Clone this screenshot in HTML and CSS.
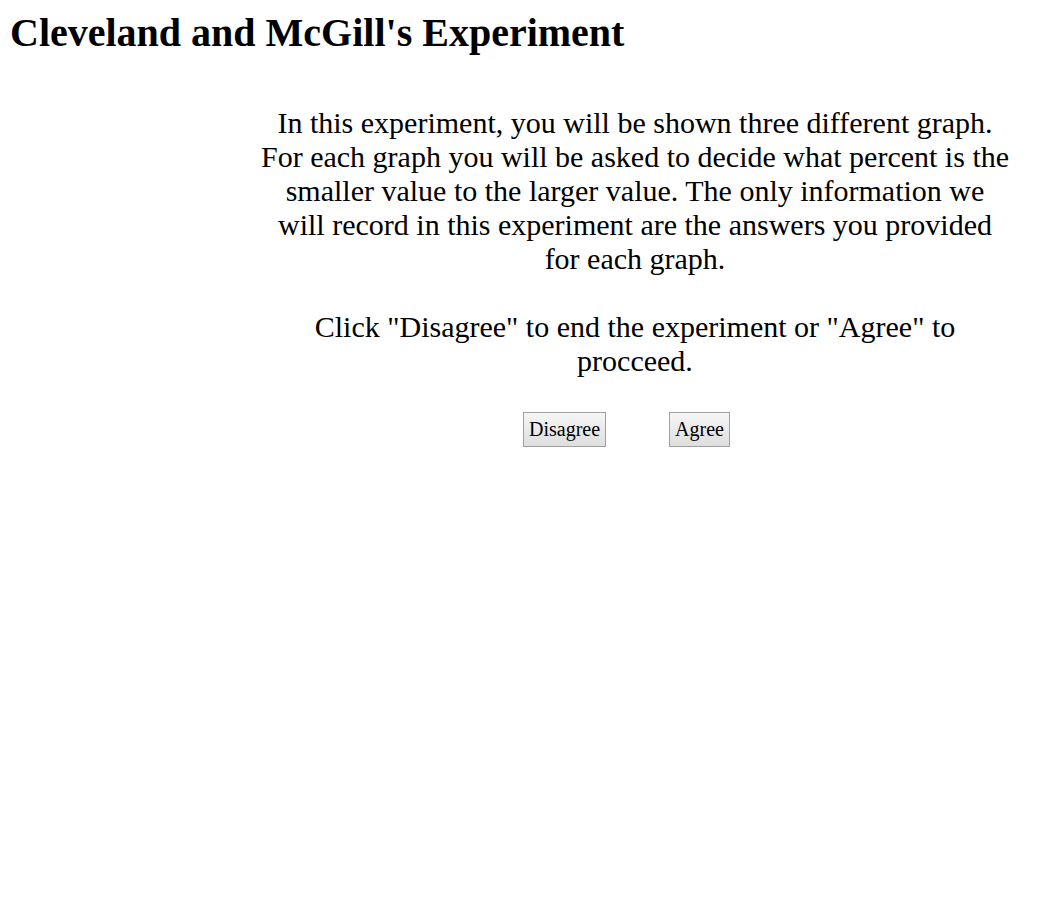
FILE: index.html
```html
<!DOCTYPE html>
<html>
<head>
<meta charset="utf-8">
<link rel="stylesheet" href="styles.css">
</head>
<body>
<h1 class="title">Cleveland and McGill's Experiment</h1>
<div class="intro">
  <p class="text">In this experiment, you will be shown three different graph. For each graph you will be asked to decide what percent is the smaller value to the larger value. The only information we will record in this experiment are the answers you provided for each graph.<br><br>Click "Disagree" to end the experiment or "Agree" to procceed.</p>
  <div class="actions">
    <button class="btn">Disagree</button>
    <button class="btn">Agree</button>
  </div>
</div>
</body>
</html>
```
FILE: styles.css
```css
body {
  margin: 8px;
  font-family: "Liberation Serif", "Times New Roman", serif;
  color: #000;
  background: #fff;
}
.title {
  font-size: 40px;
  font-weight: bold;
  margin: 1px 0 0 2px;
}
.intro {
  width: 752px;
  margin: 50px 0 0 251px;
  text-align: center;
}
.text {
  font-size: 30px;
  margin: 0;
}
.actions {
  display: flex;
  justify-content: center;
  gap: 63px;
  margin-top: 34px;
  padding-right: 17px;
}
.btn {
  font-family: "Liberation Serif", "Times New Roman", serif;
  font-size: 20px;
  padding: 5px 5px;
  background: linear-gradient(#f6f6f6, #dedede);
  border: 1px solid #a0a0a0;
  border-radius: 0;
  color: #000;
}
```
